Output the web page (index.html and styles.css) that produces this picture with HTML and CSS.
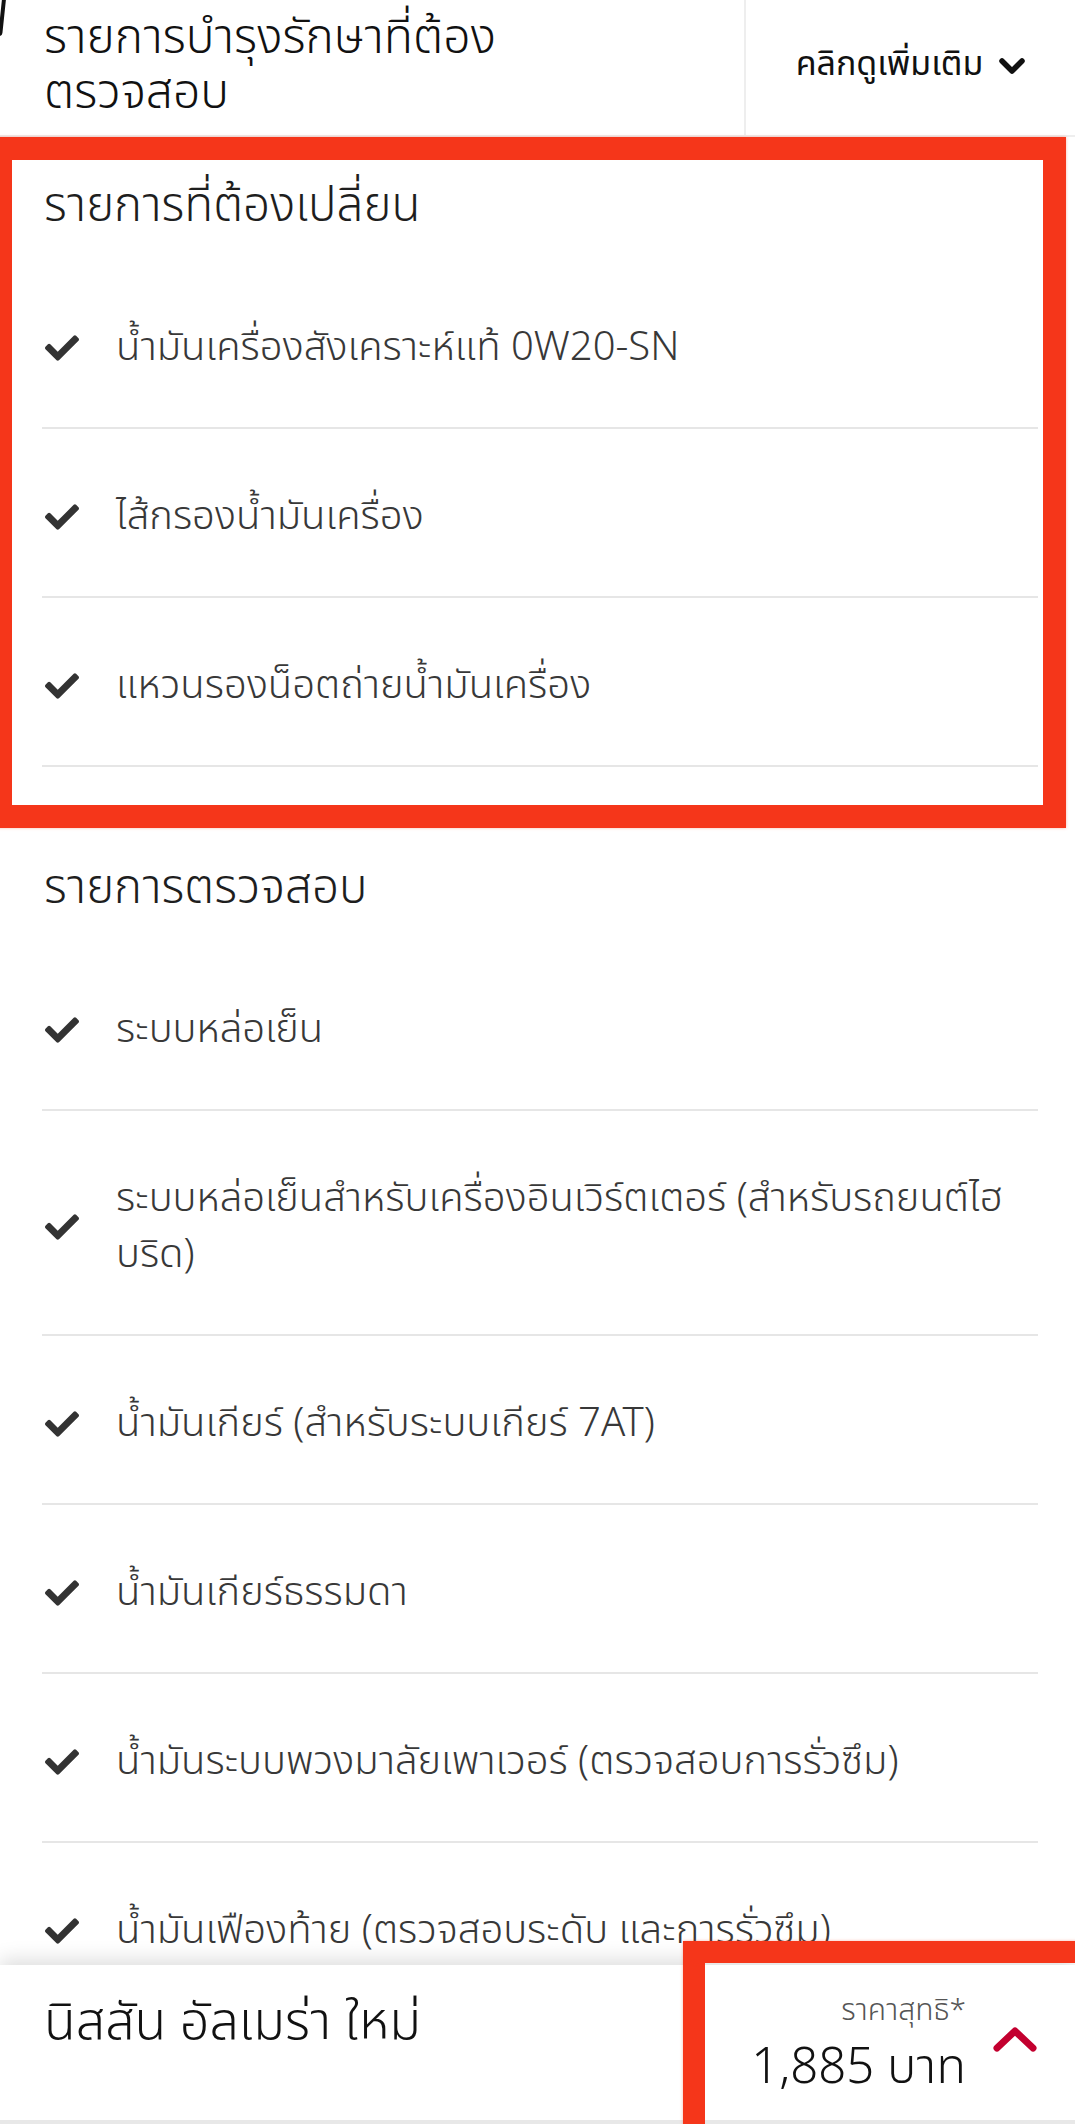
FILE: index.html
```html
<!DOCTYPE html>
<html lang="th">
<head>
<meta charset="utf-8">
<title>รายการบำรุงรักษา</title>
<link rel="stylesheet" href="styles.css">
</head>
<body>
<div class="page">
  <header class="top">
    <div class="top-title">รายการบำรุงรักษาที่ต้อง<br>ตรวจสอบ</div>
    <div class="top-more">
      <span>คลิกดูเพิ่มเติม</span>
      <svg class="chev-down" viewBox="0 0 26 18" width="26" height="18"><path d="M3 3 L13 13 L23 3" fill="none" stroke="#111" stroke-width="5.5" stroke-linecap="round" stroke-linejoin="round"/></svg>
    </div>
  </header>

  <main class="lists">
    <section class="group">
      <h2 class="group-title">รายการที่ต้องเปลี่ยน</h2>
      <ul class="items">
        <li class="item"><svg class="check" viewBox="0 0 512 512"><path d="M173.9 439.4l-166.4-166.4c-10-10-10-26.2 0-36.2l36.2-36.2c10-10 26.2-10 36.2 0L192 312.7 432.1 72.6c10-10 26.2-10 36.2 0l36.2 36.2c10 10 10 26.2 0 36.2l-294.4 294.4c-10 10-26.2 10-36.2 0z"/></svg><span>น้ำมันเครื่องสังเคราะห์แท้ 0W20-SN</span></li>
        <li class="item"><svg class="check" viewBox="0 0 512 512"><path d="M173.9 439.4l-166.4-166.4c-10-10-10-26.2 0-36.2l36.2-36.2c10-10 26.2-10 36.2 0L192 312.7 432.1 72.6c10-10 26.2-10 36.2 0l36.2 36.2c10 10 10 26.2 0 36.2l-294.4 294.4c-10 10-26.2 10-36.2 0z"/></svg><span>ไส้กรองน้ำมันเครื่อง</span></li>
        <li class="item"><svg class="check" viewBox="0 0 512 512"><path d="M173.9 439.4l-166.4-166.4c-10-10-10-26.2 0-36.2l36.2-36.2c10-10 26.2-10 36.2 0L192 312.7 432.1 72.6c10-10 26.2-10 36.2 0l36.2 36.2c10 10 10 26.2 0 36.2l-294.4 294.4c-10 10-26.2 10-36.2 0z"/></svg><span>แหวนรองน็อตถ่ายน้ำมันเครื่อง</span></li>
      </ul>
    </section>

    <section class="group">
      <h2 class="group-title">รายการตรวจสอบ</h2>
      <ul class="items">
        <li class="item"><svg class="check" viewBox="0 0 512 512"><path d="M173.9 439.4l-166.4-166.4c-10-10-10-26.2 0-36.2l36.2-36.2c10-10 26.2-10 36.2 0L192 312.7 432.1 72.6c10-10 26.2-10 36.2 0l36.2 36.2c10 10 10 26.2 0 36.2l-294.4 294.4c-10 10-26.2 10-36.2 0z"/></svg><span>ระบบหล่อเย็น</span></li>
        <li class="item"><svg class="check" viewBox="0 0 512 512"><path d="M173.9 439.4l-166.4-166.4c-10-10-10-26.2 0-36.2l36.2-36.2c10-10 26.2-10 36.2 0L192 312.7 432.1 72.6c10-10 26.2-10 36.2 0l36.2 36.2c10 10 10 26.2 0 36.2l-294.4 294.4c-10 10-26.2 10-36.2 0z"/></svg><span class="keep">ระบบหล่อเย็นสำหรับเครื่องอินเวิร์ตเตอร์ (สำหรับรถยนต์ไฮ<br>บริด)</span></li>
        <li class="item"><svg class="check" viewBox="0 0 512 512"><path d="M173.9 439.4l-166.4-166.4c-10-10-10-26.2 0-36.2l36.2-36.2c10-10 26.2-10 36.2 0L192 312.7 432.1 72.6c10-10 26.2-10 36.2 0l36.2 36.2c10 10 10 26.2 0 36.2l-294.4 294.4c-10 10-26.2 10-36.2 0z"/></svg><span>น้ำมันเกียร์ (สำหรับระบบเกียร์ 7AT)</span></li>
        <li class="item"><svg class="check" viewBox="0 0 512 512"><path d="M173.9 439.4l-166.4-166.4c-10-10-10-26.2 0-36.2l36.2-36.2c10-10 26.2-10 36.2 0L192 312.7 432.1 72.6c10-10 26.2-10 36.2 0l36.2 36.2c10 10 10 26.2 0 36.2l-294.4 294.4c-10 10-26.2 10-36.2 0z"/></svg><span>น้ำมันเกียร์ธรรมดา</span></li>
        <li class="item"><svg class="check" viewBox="0 0 512 512"><path d="M173.9 439.4l-166.4-166.4c-10-10-10-26.2 0-36.2l36.2-36.2c10-10 26.2-10 36.2 0L192 312.7 432.1 72.6c10-10 26.2-10 36.2 0l36.2 36.2c10 10 10 26.2 0 36.2l-294.4 294.4c-10 10-26.2 10-36.2 0z"/></svg><span>น้ำมันระบบพวงมาลัยเพาเวอร์ (ตรวจสอบการรั่วซึม)</span></li>
        <li class="item"><svg class="check" viewBox="0 0 512 512"><path d="M173.9 439.4l-166.4-166.4c-10-10-10-26.2 0-36.2l36.2-36.2c10-10 26.2-10 36.2 0L192 312.7 432.1 72.6c10-10 26.2-10 36.2 0l36.2 36.2c10 10 10 26.2 0 36.2l-294.4 294.4c-10 10-26.2 10-36.2 0z"/></svg><span>น้ำมันเฟืองท้าย (ตรวจสอบระดับ และการรั่วซึม)</span></li>
      </ul>
    </section>
  </main>

  <footer class="bar">
    <div class="bar-model">นิสสัน อัลเมร่า ใหม่</div>
    <div class="bar-price">
      <div class="price-text">
        <div class="price-label">ราคาสุทธิ*</div>
        <div class="price-value">1,885 บาท</div>
      </div>
      <svg class="chev-up" viewBox="0 0 44 26" width="44" height="26"><path d="M4 22 L22 5 L40 22" fill="none" stroke="#c3002f" stroke-width="7" stroke-linecap="round" stroke-linejoin="round"/></svg>
    </div>
  </footer>

  <div class="mark mark-top"></div>
  <div class="mark mark-bottom"></div>
  <div class="edge-tick"></div>
</div>
</body>
</html>
```

FILE: styles.css
```css
* { box-sizing: border-box; }
html, body { margin: 0; padding: 0; background: #fff; }
body {
  font-family: "Noto Sans Thai", "Noto Sans Thai Looped", "Noto Sans", sans-serif;
  font-weight: 300;
  color: #222;
}
.page {
  position: relative;
  width: 1075px;
  height: 2124px;
  display: flex;
  flex-direction: column;
  overflow: hidden;
}

/* header */
.top {
  display: flex;
  height: 137px;
  flex: none;
  border-bottom: 2px solid #eee;
}
.top-title {
  width: 746px;
  padding-left: 44px;
  border-right: 2px solid #eeeeee;
  display: flex;
  align-items: center;
  font-size: 48px;
  line-height: 55px;
  color: #111;
  padding-bottom: 4px;
}
.top-more {
  flex: 1;
  display: flex;
  align-items: center;
  justify-content: center;
  gap: 16px;
  font-size: 34px;
  font-weight: 400;
  color: #111;
  padding-bottom: 6px;
}
.chev-down { display: block; margin-top: 4px; }

/* lists */
.lists {
  flex: 1;
  overflow: hidden;
  padding: 15px 37px 0 42px;
}
.group + .group { margin-top: 67px; }
.group-title {
  margin: 0;
  height: 108px;
  display: flex;
  align-items: center;
  padding-left: 2px;
  font-size: 47.5px;
  font-weight: 300;
  color: #1e1e1e;
}
.items { list-style: none; margin: 0; padding: 0; }
.item {
  display: flex;
  align-items: center;
  padding: 60px 0 51px;
  border-bottom: 2px solid #e6e6e6;
  font-size: 40px;
  line-height: 56px;
  color: #383838;
}
.keep { white-space: nowrap; }
.check {
  flex: none;
  width: 34px;
  height: 34px;
  fill: #333;
  margin: 0 37px 0 3px;
}

/* footer bar */
.bar {
  flex: none;
  height: 159px;
  display: flex;
  justify-content: space-between;
  background: #fff;
  border-bottom: 4px solid #e8e8e8;
  box-shadow: 0 -6px 18px rgba(0, 0, 0, 0.13);
  position: relative;
  z-index: 1;
}
.bar-model {
  padding: 25px 0 0 44px;
  font-size: 52px;
  line-height: 66px;
  color: #111;
}
.bar-price {
  display: flex;
  align-items: flex-start;
  padding-right: 38px;
}
.price-text {
  text-align: right;
  padding-top: 28px;
}
.price-label {
  font-size: 30px;
  line-height: 36px;
  color: #555;
}
.price-value {
  margin-top: 9px;
  font-size: 49px;
  line-height: 60px;
  color: #111;
}
.chev-up { display: block; margin: 61px 0 0 27px; }

/* annotation frames drawn over the screenshot */
.mark {
  position: absolute;
  border: 23px solid #f5361a;
  box-shadow: 0 0 3px rgba(245, 54, 26, 0.35);
  pointer-events: none;
  z-index: 5;
}
.mark-top { left: -11px; top: 137px; width: 1077px; height: 691px; }
.mark-bottom { left: 683px; top: 1941px; width: 420px; height: 240px; border-width: 22px; }

.edge-tick {
  position: absolute;
  left: 0;
  top: 0;
  width: 4px;
  height: 36px;
  background: #111;
  border-radius: 0 0 3px 0;
  transform: skewX(-6deg);
}
```
